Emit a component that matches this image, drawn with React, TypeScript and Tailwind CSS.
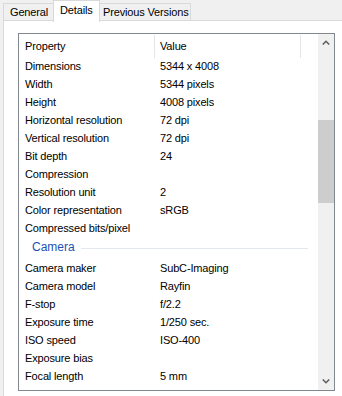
const rowsA: [string, string][] = [
  ["Dimensions", "5344 x 4008"],
  ["Width", "5344 pixels"],
  ["Height", "4008 pixels"],
  ["Horizontal resolution", "72 dpi"],
  ["Vertical resolution", "72 dpi"],
  ["Bit depth", "24"],
  ["Compression", ""],
  ["Resolution unit", "2"],
  ["Color representation", "sRGB"],
  ["Compressed bits/pixel", ""],
];

const rowsB: [string, string][] = [
  ["Camera maker", "SubC-Imaging"],
  ["Camera model", "Rayfin"],
  ["F-stop", "f/2.2"],
  ["Exposure time", "1/250 sec."],
  ["ISO speed", "ISO-400"],
  ["Exposure bias", ""],
  ["Focal length", "5 mm"],
];

function Row({ name, value }: { name: string; value: string }) {
  return (
    <div className="flex h-[18px] items-center shrink-0">
      <div className="w-[136px] pl-[6px] whitespace-nowrap">{name}</div>
      <div className="w-[146px] pl-[5px] whitespace-nowrap">{value}</div>
    </div>
  );
}

function Chevron({ up }: { up?: boolean }) {
  return (
    <svg width="8" height="5" viewBox="0 0 8 5" className="block">
      <polyline
        points={up ? "0.8,4.5 4,1.3 7.2,4.5" : "0.8,0.5 4,3.7 7.2,0.5"}
        fill="none"
        stroke="#606060"
        strokeWidth="1.6"
      />
    </svg>
  );
}

export default function App() {
  return (
    <div
      className="w-[342px] h-[396px] bg-[#f0f0f0] overflow-hidden flex flex-col text-[11px] tracking-[-0.15px] text-black"
      style={{ fontFamily: '"Liberation Sans", Arial, sans-serif' }}
    >
      {/* Tabs */}
      <div className="flex items-end h-[21px] pl-[3px] shrink-0">
        <div className="w-[50px] h-[18px] border-t border-l border-[#d9d9d9] flex items-center pl-[6px] pb-[1px]">
          General
        </div>
        <div className="relative z-10 w-[47px] h-[22px] mb-[-1px] bg-white border-t border-l border-r border-[#d9d9d9] flex items-center pl-[6px] pb-[3px]">
          Details
        </div>
        <div className="w-[91px] h-[18px] border-t border-r border-[#d9d9d9] flex items-center pl-[3px] pb-[1px]">
          Previous Versions
        </div>
      </div>

      {/* Panel */}
      <div className="flex-1 -mt-px ml-[3px] bg-white border-t border-l border-[#d9d9d9] pl-[14px] pt-[12px]">
        <div className="w-[317px] h-[358px] border border-[#828790] flex overflow-hidden">
          <div className="flex-1 flex flex-col overflow-hidden">
            {/* Header */}
            <div className="flex h-[23px] shrink-0 items-center">
              <div className="w-[136px] h-full pl-[6px] flex items-center border-r border-[#e5e5e5] mt-px">
                Property
              </div>
              <div className="w-[146px] h-full pl-[5px] flex items-center border-r border-[#e5e5e5] mt-px">
                Value
              </div>
            </div>
            {rowsA.map(([n, v]) => (
              <Row key={n} name={n} value={v} />
            ))}
            {/* Group header */}
            <div className="flex h-[22px] items-center shrink-0 pl-[13px] pr-[10px] pb-[2px]">
              <span className="text-[#1e50b4] text-[12px] tracking-[0px]">Camera</span>
              <div className="flex-1 h-px bg-[#e2e8ee] ml-[6px] mt-[3px]" />
            </div>
            {rowsB.map(([n, v]) => (
              <Row key={n} name={n} value={v} />
            ))}
          </div>
          {/* Scrollbar */}
          <div className="w-[16px] bg-[#f0f0f0] flex flex-col shrink-0">
            <div className="h-[17px] flex items-center justify-center">
              <Chevron up />
            </div>
            <div className="flex-1">
              <div className="mt-[69px] h-[83px] bg-[#cdcdcd]" />
            </div>
            <div className="h-[17px] flex items-center justify-center">
              <Chevron />
            </div>
          </div>
        </div>
      </div>
    </div>
  );
}
